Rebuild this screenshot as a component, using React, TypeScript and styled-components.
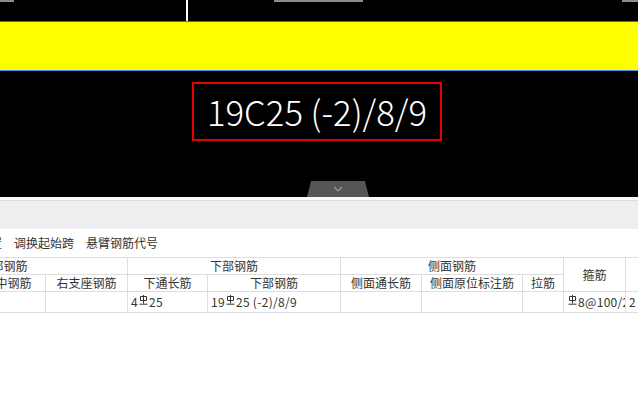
import React from 'react';
import styled, { createGlobalStyle } from 'styled-components';

const GlobalStyle = createGlobalStyle`
	html, body {
		margin: 0;
		padding: 0;
		background: #fff;
		overflow: hidden;
	}
	body {
		font-family: "Noto Sans CJK SC", "Noto Sans", sans-serif;
	}
`;

const Page = styled.div`
	width: 638px;
	height: 401px;
	overflow: hidden;
	display: flex;
	flex-direction: column;
	background: #fff;
`;

/* ---------- drawing canvas ---------- */

const Canvas = styled.div`
	height: 197px;
	background: #000;
	display: flex;
	flex-direction: column;
	flex-shrink: 0;
`;

const TopStrip = styled.div`
	height: 21px;
	display: flex;
	align-items: flex-start;
`;

const Gap = styled.div<{ $w: number }>`
	width: ${(p) => p.$w}px;
	flex-shrink: 0;
`;

const Tick = styled.div<{ $w?: number }>`
	height: 2px;
	background: #8c8c8c;
	${(p) => (p.$w ? `width:${p.$w}px;flex-shrink:0;` : 'flex:1;')}
`;

const Cursor = styled.div`
	width: 2px;
	height: 21px;
	background: #fff;
	flex-shrink: 0;
`;

const Band = styled.div`
	height: 48px;
	background: #ffff00;
	border-top: 1px solid #4f6e80;
	border-bottom: 1px solid #4d90e6;
`;

const Annotation = styled.div`
	margin: 11px 0 0 192px;
	width: 246px;
	height: 55px;
	border: 2px solid #e60000;
	color: #fff;
	font-family: "Noto Sans CJK SC", "Noto Sans", sans-serif;
	font-size: 34.7px;
	font-weight: 300;
	line-height: 54px;
	text-align: center;
	white-space: nowrap;
`;

const Tab = styled.div`
	margin: auto 0 0 307px;
	width: 62px;
	height: 16px;
	background: #555;
	clip-path: polygon(4px 0, 58px 0, 62px 100%, 0 100%);
	border-radius: 3px 3px 0 0;
	display: flex;
	justify-content: center;
	align-items: center;
`;

/* ---------- panel ---------- */

const Splitter = styled.div`
	height: 3px;
	background: #fafafa;
	border-bottom: 1px solid #dcdcdc;
	flex-shrink: 0;
`;

const GrayBar = styled.div`
	height: 28px;
	background: #eeeef0;
	flex-shrink: 0;
`;

const Toolbar = styled.div`
	display: flex;
	gap: 12px;
	margin: 6px 0 0 -46px;
	height: 16px;
	font-size: 12px;
	line-height: 16px;
	color: #333;
	white-space: nowrap;
`;

const ToolItem = styled.span``;

const Table = styled.table`
	margin: 6px 0 0 -121px;
	border-collapse: collapse;
	table-layout: fixed;
	width: 806px;
	font-size: 12px;
	color: #333;
`;

const Th = styled.th`
	font-weight: normal;
	height: 16px;
	padding: 0;
	line-height: 16px;
	border: 1px solid #dedede;
	text-align: center;
	white-space: nowrap;
	overflow: hidden;
`;

const Td = styled.td`
	height: 20px;
	padding: 0 0 0 3px;
	border: 1px solid #dedede;
	text-align: left;
	white-space: nowrap;
	overflow: hidden;
	line-height: 20px;
	letter-spacing: 0.3px;
`;

const Steel = styled.svg`
	width: 9px;
	height: 10px;
	margin: 0 1px;
	vertical-align: 2px;
`;

const SteelMark: React.FC = () => (
	<Steel viewBox="0 0 9 10">
		<path d="M1.5 1.5h6v4h-6z M4.5 0v8.5 M0.5 9.2h8" fill="none" stroke="#333" strokeWidth="1" />
	</Steel>
);

const widths = [90, 76, 82, 80, 133, 81, 101, 41, 62, 60];

const App: React.FC = () => {
	return (
		<Page>
			<GlobalStyle />
			<Canvas>
				<TopStrip>
					<Tick $w={14} />
					<Gap $w={172} />
					<Cursor />
					<Gap $w={86} />
					<Tick $w={89} />
					<Gap $w={259} />
					<Tick />
				</TopStrip>
				<Band />
				<Annotation>19C25 (-2)/8/9</Annotation>
				<Tab>
					<svg width="10" height="6" viewBox="0 0 10 6">
						<path d="M1 1l4 4 4-4" fill="none" stroke="#9a9a9a" strokeWidth="1.2" />
					</svg>
				</Tab>
			</Canvas>
			<Splitter />
			<GrayBar />
			<Toolbar>
				<ToolItem>页面设置</ToolItem>
				<ToolItem>调换起始跨</ToolItem>
				<ToolItem>悬臂钢筋代号</ToolItem>
			</Toolbar>
			<Table>
				<colgroup>
					{widths.map((w, i) => (
						<col key={i} style={{ width: w }} />
					))}
				</colgroup>
				<thead>
					<tr>
						<Th colSpan={3}>上部钢筋</Th>
						<Th colSpan={2}>下部钢筋</Th>
						<Th colSpan={3}>侧面钢筋</Th>
						<Th rowSpan={2}>箍筋</Th>
						<Th rowSpan={2}>肢数</Th>
					</tr>
					<tr>
						<Th>左支座钢筋</Th>
						<Th>跨中钢筋</Th>
						<Th>右支座钢筋</Th>
						<Th>下通长筋</Th>
						<Th>下部钢筋</Th>
						<Th>侧面通长筋</Th>
						<Th>侧面原位标注筋</Th>
						<Th>拉筋</Th>
					</tr>
				</thead>
				<tbody>
					<tr>
						<Td></Td>
						<Td></Td>
						<Td></Td>
						<Td>4<SteelMark />25</Td>
						<Td>19<SteelMark />25 (-2)/8/9</Td>
						<Td></Td>
						<Td></Td>
						<Td></Td>
						<Td><SteelMark />8@100/200(2)</Td>
						<Td>2</Td>
					</tr>
				</tbody>
			</Table>
		</Page>
	);
};

export default App;
